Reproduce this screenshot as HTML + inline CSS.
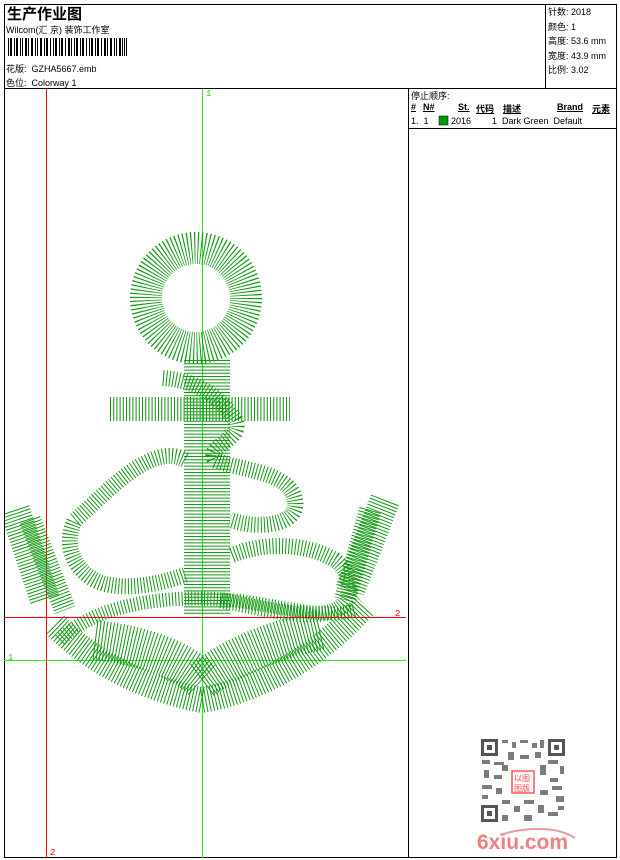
<!DOCTYPE html>
<html><head><meta charset="utf-8"><style>
body{margin:0;width:620px;height:860px;background:#fff;font-family:"Liberation Sans","Noto Sans CJK SC",sans-serif;position:relative;overflow:hidden}
.a{position:absolute;white-space:nowrap;color:#000}
.s{font-size:9px}
</style></head><body>
<svg class="a" style="left:0;top:0" width="620" height="860">
<defs><clipPath id="c"><rect x="5" y="89" width="403" height="768"/></clipPath></defs>
<rect x="4.5" y="4.5" width="612" height="853" fill="none" stroke="#000"/>
<line x1="4" y1="88.5" x2="617" y2="88.5" stroke="#000"/>
<line x1="545.5" y1="4" x2="545.5" y2="88" stroke="#000"/>
<line x1="408.5" y1="88" x2="408.5" y2="858" stroke="#000"/>
<line x1="409" y1="128.5" x2="617" y2="128.5" stroke="#000"/>
<g fill="#000">
<rect x="8" y="38" width="1" height="18"/><rect x="10" y="38" width="2" height="18"/><rect x="14" y="38" width="1" height="18"/><rect x="16" y="38" width="2" height="18"/><rect x="20" y="38" width="1" height="18"/><rect x="22" y="38" width="1" height="18"/><rect x="25" y="38" width="2" height="18"/><rect x="28" y="38" width="1" height="18"/><rect x="31" y="38" width="2" height="18"/><rect x="35" y="38" width="1" height="18"/><rect x="37" y="38" width="1" height="18"/><rect x="40" y="38" width="2" height="18"/><rect x="44" y="38" width="1" height="18"/><rect x="46" y="38" width="2" height="18"/><rect x="50" y="38" width="1" height="18"/><rect x="53" y="38" width="1" height="18"/><rect x="55" y="38" width="2" height="18"/><rect x="59" y="38" width="1" height="18"/><rect x="61" y="38" width="2" height="18"/><rect x="65" y="38" width="1" height="18"/><rect x="68" y="38" width="2" height="18"/><rect x="71" y="38" width="1" height="18"/><rect x="74" y="38" width="1" height="18"/><rect x="76" y="38" width="2" height="18"/><rect x="80" y="38" width="1" height="18"/><rect x="82" y="38" width="2" height="18"/><rect x="86" y="38" width="1" height="18"/><rect x="89" y="38" width="1" height="18"/><rect x="91" y="38" width="2" height="18"/><rect x="95" y="38" width="1" height="18"/><rect x="97" y="38" width="2" height="18"/><rect x="101" y="38" width="1" height="18"/><rect x="104" y="38" width="2" height="18"/><rect x="107" y="38" width="1" height="18"/><rect x="110" y="38" width="2" height="18"/><rect x="114" y="38" width="1" height="18"/><rect x="116" y="38" width="1" height="18"/><rect x="119" y="38" width="2" height="18"/><rect x="122" y="38" width="1" height="18"/><rect x="124" y="38" width="1" height="18"/><rect x="126" y="38" width="1" height="18"/>
</g>
<line x1="46.5" y1="89" x2="46.5" y2="858" stroke="#f00"/>
<line x1="202.5" y1="89" x2="202.5" y2="858" stroke="#2e2" />
<line x1="4" y1="660.5" x2="406" y2="660.5" stroke="#2e2"/>
<g clip-path="url(#c)" fill="none" stroke="#129912" stroke-dasharray="1 2.2" stroke-linejoin="round">
<circle cx="196" cy="298" r="50" stroke-width="32"/>
<line x1="110" y1="409" x2="290" y2="409" stroke-width="24"/>
<line x1="207" y1="360" x2="207" y2="615" stroke-width="46"/>
<path d="M163 378 C190 380 215 390 235 420 C245 440 205 445 215 460 C235 470 290 470 295 500 C300 525 260 530 230 520" stroke-width="16"/>
<path d="M185 460 C150 440 100 500 75 520 C60 550 80 580 110 585 C140 590 170 580 185 575" stroke-width="16"/>
<path d="M232 555 C270 540 310 545 335 560 C355 575 355 605 330 612 C300 620 250 605 220 600" stroke-width="16"/>
<path d="M60 640 C100 600 180 595 230 600 C280 605 320 620 355 610" stroke-width="14"/>
<path d="M15 510 L45 600" stroke-width="30"/>
<path d="M30 520 L65 610" stroke-width="22"/>
<path d="M385 500 L350 590" stroke-width="30"/>
<path d="M370 510 L345 600" stroke-width="22"/>
<path d="M55 625 C95 665 150 690 202 700" stroke-width="26"/>
<path d="M202 700 C260 690 320 655 365 605" stroke-width="26"/>
<path d="M95 640 C135 645 175 655 202 680" stroke-width="40"/>
<path d="M202 680 C235 655 275 640 320 630" stroke-width="40"/>
</g>
<line x1="4" y1="617.5" x2="406" y2="617.5" stroke="#f00"/>
<g fill="#555">
<rect x="481" y="739" width="17" height="17"/><rect x="548" y="739" width="17" height="17"/><rect x="481" y="805" width="17" height="17"/>
</g>
<g fill="#fff"><rect x="484" y="742" width="11" height="11"/><rect x="551" y="742" width="11" height="11"/><rect x="484" y="808" width="11" height="11"/></g>
<g fill="#555"><rect x="487" y="745" width="5" height="5"/><rect x="554" y="745" width="5" height="5"/><rect x="487" y="811" width="5" height="5"/></g>
<g fill="#666" opacity="0.85">
<rect x="502" y="740" width="6" height="3"/><rect x="512" y="742" width="4" height="6"/><rect x="520" y="740" width="8" height="3"/><rect x="532" y="743" width="5" height="5"/><rect x="540" y="740" width="4" height="8"/>
<rect x="482" y="760" width="8" height="4"/><rect x="494" y="762" width="10" height="3"/><rect x="508" y="752" width="6" height="8"/><rect x="520" y="755" width="9" height="4"/><rect x="535" y="752" width="6" height="6"/><rect x="548" y="760" width="10" height="4"/><rect x="560" y="766" width="4" height="8"/>
<rect x="484" y="770" width="5" height="8"/><rect x="494" y="775" width="8" height="4"/><rect x="502" y="765" width="6" height="6"/><rect x="540" y="765" width="6" height="10"/><rect x="550" y="778" width="8" height="4"/>
<rect x="482" y="785" width="10" height="4"/><rect x="496" y="788" width="6" height="6"/><rect x="540" y="790" width="8" height="5"/><rect x="552" y="786" width="10" height="4"/><rect x="482" y="795" width="6" height="4"/><rect x="556" y="796" width="8" height="6"/>
<rect x="502" y="800" width="8" height="4"/><rect x="514" y="806" width="6" height="6"/><rect x="524" y="800" width="10" height="4"/><rect x="538" y="805" width="6" height="8"/><rect x="548" y="812" width="10" height="4"/><rect x="502" y="815" width="6" height="6"/><rect x="524" y="815" width="8" height="6"/><rect x="558" y="806" width="6" height="4"/>
</g>
<rect x="512" y="771" width="22" height="22" fill="#fff" stroke="#f55" stroke-width="1.5"/>
<text x="514" y="781" font-size="8" fill="#f44" font-family="Noto Sans CJK SC">以图</text>
<text x="514" y="791" font-size="8" fill="#f44" font-family="Noto Sans CJK SC">图版</text>
<path d="M500 835 C530 825 560 828 575 838" stroke="#e99" stroke-width="2" fill="none"/>
<text x="477" y="849" font-size="21" font-weight="bold" fill="#f08080" font-family="Liberation Sans">6xiu.com</text>
<text x="206" y="96" font-size="9" fill="#2c2" font-family="Liberation Mono">1</text>
<text x="8" y="660" font-size="9" fill="#2c2" font-family="Liberation Mono">1</text>
<text x="395" y="616" font-size="9" fill="#f00" font-family="Liberation Mono">2</text>
<text x="50" y="855" font-size="9" fill="#f00" font-family="Liberation Mono">2</text>
<rect x="439" y="116" width="9" height="9" fill="#090" stroke="#000" stroke-width="0.5"/>
</svg>
<div class="a" style="left:7px;top:3px;font-size:15px;font-weight:bold">生产作业图</div>
<div class="a s" style="left:6px;top:23px">Wilcom(汇 京) 装饰工作室</div>
<div class="a s" style="left:6px;top:62px">花版:&nbsp; GZHA5667.emb</div>
<div class="a s" style="left:6px;top:76px">色位:&nbsp; Colorway 1</div>
<div class="a s" style="left:548px;top:5px;line-height:14.5px">针数: 2018<br>颜色: 1<br>高度: 53.6 mm<br>宽度: 43.9 mm<br>比例: 3.02</div>
<div class="a s" style="left:411px;top:89px">停止顺序:</div>
<div class="a s" style="left:411px;top:102px;font-weight:bold;text-decoration:underline">#</div>
<div class="a s" style="left:423px;top:102px;font-weight:bold;text-decoration:underline">N#</div>
<div class="a s" style="left:458px;top:102px;font-weight:bold;text-decoration:underline">St.</div>
<div class="a s" style="left:476px;top:102px;font-weight:bold;text-decoration:underline">代码</div>
<div class="a s" style="left:503px;top:102px;font-weight:bold;text-decoration:underline">描述</div>
<div class="a s" style="left:557px;top:102px;font-weight:bold;text-decoration:underline">Brand</div>
<div class="a s" style="left:592px;top:102px;font-weight:bold;text-decoration:underline">元素</div>
<div class="a s" style="left:411px;top:116px">1.&nbsp; 1</div>
<div class="a s" style="left:451px;top:116px">2016</div>
<div class="a s" style="left:492px;top:116px">1&nbsp; Dark Green&nbsp; Default</div>
</body></html>
